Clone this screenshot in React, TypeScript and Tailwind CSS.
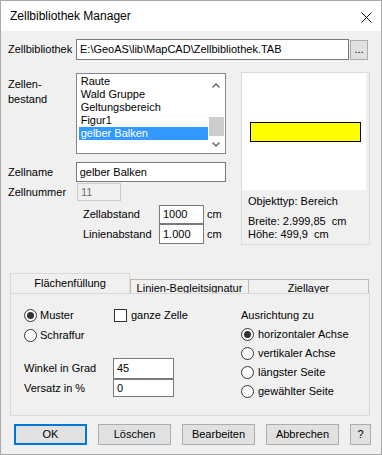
import React from 'react';

const items = ['Raute', 'Wald Gruppe', 'Geltungsbereich', 'Figur1', 'gelber Balken'];

function Radio({ checked = false }: { checked?: boolean }) {
  return (
    <span className="w-[13px] h-[13px] rounded-full border border-[#333333] bg-white flex items-center justify-center shrink-0">
      {checked && <span className="w-[7px] h-[7px] rounded-full bg-[#333333]" />}
    </span>
  );
}

function Checkbox() {
  return <span className="w-[13px] h-[13px] border border-[#333333] bg-white shrink-0" />;
}

function Button({ label, width = 'w-[73px]', focused = false }: { label: string; width?: string; focused?: boolean }) {
  return (
    <button
      className={`${width} h-[21px] bg-[#e1e1e1] flex items-center justify-center leading-none ${
        focused ? 'border-2 border-[#0078d7]' : 'border border-[#adadad]'
      }`}
    >
      {label}
    </button>
  );
}

export default function App() {
  return (
    <div
      className="w-[382px] h-[455px] border border-[#aaaaaa] bg-[#f0f0f0] flex flex-col text-[11px] text-black leading-[13px]"
      style={{ fontFamily: '"Liberation Sans", Arial, sans-serif' }}
    >
      {/* Title bar */}
      <div className="h-[30px] bg-white flex items-center justify-between pl-[9px] pr-[9px] shrink-0">
        <span className="text-[12px] pt-[1px]">Zellbibliothek Manager</span>
        <svg width="11" height="11" viewBox="0 0 11 11" className="mt-[2px]">
          <path d="M0.5 0.5 L10.5 10.5 M10.5 0.5 L0.5 10.5" stroke="#111" strokeWidth="1" />
        </svg>
      </div>

      <div className="pl-[7px] pr-[11px]">
        {/* Zellbibliothek */}
        <div className="mt-[8px] flex items-center">
          <span className="w-[68px]">Zellbibliothek</span>
          <div className="w-[273px] h-[21px] border border-[#7a7a7a] bg-white pl-[3px] flex items-center">
            E:\GeoAS\lib\MapCAD\Zellbibliothek.TAB
          </div>
          <button className="ml-[1px] w-[18px] h-[20px] mt-[1px] border border-[#adadad] bg-[#e1e1e1] flex items-end justify-center pb-[4px] leading-none">
            ...
          </button>
        </div>

        {/* Middle section */}
        <div className="mt-[12px] flex items-start">
          <div className="flex flex-col w-[218px]">
            <div className="flex mt-[1px]">
              <div className="w-[68px] pt-[4px] leading-[15px]">
                Zellen-
                <br />
                bestand
              </div>
              <div className="w-[151px] h-[81px] border border-[#828790] bg-white flex p-[1px]">
                <div className="flex-1 flex flex-col pl-[1px]">
                  {items.map((it) => (
                    <div
                      key={it}
                      className={`h-[13px] pl-[2px] leading-[13px] ${
                        it === 'gelber Balken' ? 'bg-[#3399ff] text-white' : ''
                      }`}
                    >
                      {it}
                    </div>
                  ))}
                </div>
                <div className="w-[16px] flex flex-col items-center">
                  <div className="h-[17px] w-full flex items-center justify-center mt-[2px]">
                    <svg width="8" height="5" viewBox="0 0 8 5">
                      <path d="M0.5 4.5 L4 1 L7.5 4.5" stroke="#606060" strokeWidth="1.3" fill="none" />
                    </svg>
                  </div>
                  <div className="mt-[23px] w-[15px] h-[19px] bg-[#cdcdcd]" />
                  <div className="h-[16px] w-full flex items-center justify-center">
                    <svg width="8" height="5" viewBox="0 0 8 5">
                      <path d="M0.5 0.5 L4 4 L7.5 0.5" stroke="#606060" strokeWidth="1.3" fill="none" />
                    </svg>
                  </div>
                </div>
              </div>
            </div>

            <div className="mt-[8px] flex items-center">
              <span className="w-[68px]">Zellname</span>
              <div className="w-[151px] h-[20px] border border-[#7a7a7a] bg-white pl-[3px] flex items-center">
                gelber Balken
              </div>
            </div>

            <div className="mt-[1px] flex items-center">
              <span className="w-[69px]">Zellnummer</span>
              <div className="w-[44px] h-[18px] border border-[#cccccc] bg-[#f0f0f0] pl-[3px] flex items-center text-[#6d6d6d]">
                11
              </div>
            </div>

            <div className="mt-[4px] flex items-center">
              <span className="ml-[75px] w-[76px]">Zellabstand</span>
              <div className="w-[45px] h-[19px] border border-[#7a7a7a] bg-white pl-[3px] flex items-center">
                1000
              </div>
              <span className="ml-[3px]">cm</span>
            </div>
            <div className="flex items-center">
              <span className="ml-[75px] w-[76px]">Linienabstand</span>
              <div className="w-[45px] h-[20px] border border-[#7a7a7a] bg-white pl-[3px] flex items-center">
                1.000
              </div>
              <span className="ml-[3px]">cm</span>
            </div>
          </div>

          {/* Preview */}
          <div className="ml-[15px] w-[129px] h-[173px] border border-[#dadada] flex flex-col">
            <div className="w-[124px] h-[117px] bg-white pt-[49px] pl-[8px]">
              <div className="w-[111px] h-[20px] border border-black bg-[#ffff00]" />
            </div>
            <div className="pl-[6px] pt-[5px]">Objekttyp: Bereich</div>
            <div className="pl-[6px] pt-[7px] whitespace-pre">Breite: 2.999,85  cm</div>
            <div className="pl-[6px] whitespace-pre">Höhe: 499,9  cm</div>
          </div>
        </div>
      </div>

      {/* Tabs */}
      <div className="mt-[28px] pl-[9px] flex items-end">
        <div className="w-[120px] h-[20px] border border-b-0 border-[#d9d9d9] flex justify-center pt-[3px]">
          Flächenfüllung
        </div>
        <div className="w-[119px] h-[14px] border border-b-0 border-[#b9b9b9] overflow-hidden flex justify-center pt-[2px]">
          <span className="whitespace-nowrap">Linien-Begleitsignatur</span>
        </div>
        <div className="w-[120px] h-[14px] border border-b-0 border-l-0 border-[#b9b9b9] overflow-hidden flex justify-center pt-[2px]">
          <span>Ziellayer</span>
        </div>
      </div>
      <div className="ml-[9px] w-[360px] h-[123px] border border-[#d9d9d9] flex">
        <div className="w-[230px] pl-[13px] pt-[15px] flex flex-col">
          <div className="flex items-center h-[13px]">
            <div className="w-[90px] flex items-center">
              <Radio checked />
              <span className="ml-[3px]">Muster</span>
            </div>
            <Checkbox />
            <span className="ml-[4px]">ganze Zelle</span>
          </div>
          <div className="mt-[7px] flex items-center h-[13px]">
            <Radio />
            <span className="ml-[3px]">Schraffur</span>
          </div>
          <div className="mt-[16px] flex items-center">
            <span className="w-[89px]">Winkel in Grad</span>
            <div className="w-[61px] h-[21px] border border-[#7a7a7a] bg-white pl-[3px] flex items-center">45</div>
          </div>
          <div className="flex items-center">
            <span className="w-[89px]">Versatz in %</span>
            <div className="w-[61px] h-[18px] border border-[#7a7a7a] bg-white pl-[3px] flex items-center">0</div>
          </div>
        </div>
        <div className="pt-[15px] flex flex-col">
          <div className="h-[13px]">Ausrichtung zu</div>
          {['horizontaler Achse', 'vertikaler Achse', 'längster Seite', 'gewählter Seite'].map((t, i) => (
            <div key={t} className="mt-[6px] h-[13px] flex items-center">
              <Radio checked={i === 0} />
              <span className="ml-[4px]">{t}</span>
            </div>
          ))}
        </div>
      </div>

      {/* Buttons */}
      <div className="mt-[8px] pl-[13px] flex items-center gap-[11px]">
        <Button label="OK" focused />
        <Button label="Löschen" />
        <Button label="Bearbeiten" />
        <Button label="Abbrechen" />
        <Button label="?" width="w-[21px]" />
      </div>
    </div>
  );
}
